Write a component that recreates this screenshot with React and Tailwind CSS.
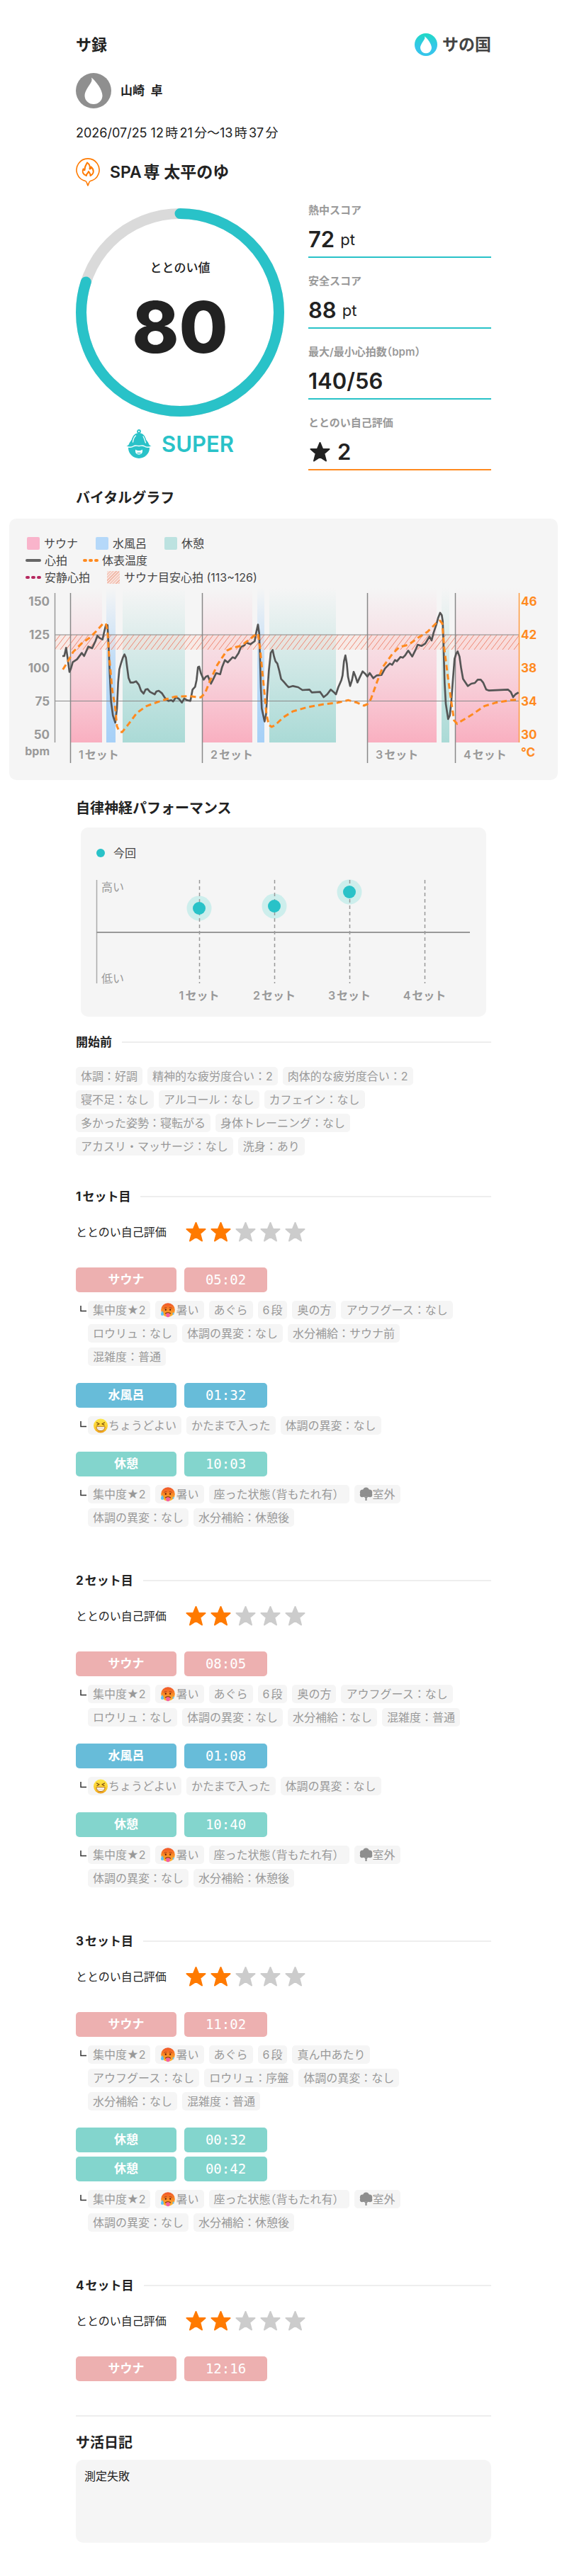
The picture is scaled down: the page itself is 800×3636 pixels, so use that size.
import React from 'react';

const HEART_RATE =
    '264,738 272,738 280,703 286,745 294,805 300,792 308,764 326,752 346,725 356,738 374,698 390,705 404,675 412,652 422,662 434,668 440,640 448,608 455,607 460,700 464,800 470,930 478,990 488,1020 495,960 500,850 505,795 512,770 520,745 527,731 533,745 538,785 544,830 552,850 565,850 576,845 588,860 597,885 608,897 616,880 625,878 635,890 655,900 662,888 672,885 685,895 698,915 712,928 725,925 733,930 745,912 758,920 770,935 780,918 792,925 806,928 815,880 826,868 832,840 838,785 843,783 850,810 862,838 872,825 880,822 893,855 903,835 915,810 932,815 940,785 952,755 964,765 985,743 995,748 1010,725 1020,700 1035,692 1040,680 1060,688 1078,675 1084,640 1092,605 1097,640 1101,760 1104,870 1108,960 1120,1015 1126,985 1131,900 1138,800 1146,725 1154,712 1160,740 1166,760 1174,770 1182,800 1190,835 1202,848 1214,862 1222,870 1240,865 1262,870 1280,882 1310,880 1320,892 1355,890 1370,912 1385,900 1400,880 1412,890 1422,900 1432,870 1445,840 1450,820 1456,760 1462,735 1468,770 1473,825 1482,865 1490,840 1497,805 1505,825 1513,850 1522,830 1535,803 1545,812 1555,825 1565,810 1580,832 1595,820 1615,818 1630,790 1650,770 1660,775 1672,755 1680,760 1695,742 1705,745 1715,735 1728,715 1745,740 1760,710 1768,690 1785,695 1800,685 1818,655 1827,672 1835,640 1847,605 1855,575 1863,555 1870,565 1874,590 1877,680 1882,850 1887,940 1897,1005 1904,990 1910,935 1917,840 1924,750 1931,728 1937,718 1945,740 1952,790 1960,835 1970,850 1980,865 1995,855 2010,852 2022,838 2035,838 2045,850 2058,880 2070,884 2150,880 2162,890 2172,912 2182,900 2195,892';

const SKIN_TEMP =
    '266,795 285,765 310,720 345,685 380,660 410,630 435,602 448,600 455,630 462,740 475,880 488,960 495,1035 505,1058 517,1060 545,1025 580,978 620,950 680,928 740,910 800,908 850,913 868,895 890,840 920,775 960,715 985,703 1020,695 1060,665 1085,645 1092,643 1100,700 1115,850 1128,985 1138,1030 1150,1038 1165,1030 1200,997 1240,972 1300,955 1370,942 1430,935 1475,925 1510,935 1540,948 1555,942 1570,920 1595,850 1620,785 1660,730 1690,700 1730,690 1770,660 1810,635 1845,600 1862,588 1872,600 1880,700 1895,820 1910,930 1922,1010 1935,1025 1950,1015 2000,985 2050,950 2100,935 2160,925 2198,922';

const BANDS = [
    { x: 86, w: 45, fill: 'url(#sauna)' },
    { x: 137, w: 13, fill: 'url(#water)' },
    { x: 160, w: 88, fill: 'url(#rest)' },
    { x: 272, w: 71, fill: 'url(#sauna)' },
    { x: 350, w: 10, fill: 'url(#water)' },
    { x: 367, w: 94, fill: 'url(#rest)' },
    { x: 505, w: 98, fill: 'url(#sauna)' },
    { x: 610, w: 11, fill: 'url(#rest)' },
    { x: 629, w: 91, fill: 'url(#sauna)' },
];

const AXIS_ROWS = [
    { y: 25, bpm: '150', temp: '46' },
    { y: 72, bpm: '125', temp: '42' },
    { y: 119, bpm: '100', temp: '38' },
    { y: 166, bpm: '75', temp: '34' },
    { y: 213, bpm: '50', temp: '30' },
];

const SET_LINES = [86, 272, 505, 629];

const PERFORMANCE = [
    { x: 167, y: 54 },
    { x: 273, y: 51 },
    { x: 379, y: 31 },
    { x: 485, y: null },
];

// opening bracket takes half a cell after kanji
const Open = () => <span className="[font-feature-settings:'halt']">（</span>;

const Drop = ({ className }) => (
    <path
        className={className}
        d="M22 6.500C24 12 20 15 16.500 21C14 25.500 12.500 28 12.500 32A12.500 12 0 0 0 37.500 32C37.500 24 29 12 22 6.500Z"
    />
);

const HotFace = () => (
    <svg className="h-[21px] w-[22px] shrink-0" viewBox="0 0 22 21" aria-label="暑い顔">
        <defs>
            <linearGradient id="hot" x1="0" y1="0" x2="0" y2="1">
                <stop offset="0" stopColor="#f0542a" />
                <stop offset="0.5" stopColor="#f98a25" />
                <stop offset="1" stopColor="#fdb62e" />
            </linearGradient>
        </defs>
        <circle cx="11" cy="10" r="9.800" fill="url(#hot)" />
        <path d="M5.500 7.500Q7 6 9 6.500M13 6.500Q15 6 16.500 7.500" stroke="#b5421a" strokeWidth="1" fill="none" strokeLinecap="round" />
        <ellipse cx="7.800" cy="9.700" rx="1.100" ry="1.400" fill="#6b2410" />
        <ellipse cx="14.200" cy="9.700" rx="1.100" ry="1.400" fill="#6b2410" />
        <path d="M7.500 15Q11 12.500 14.500 15" stroke="#6b2410" strokeWidth="1.200" fill="none" strokeLinecap="round" />
        <path d="M8.300 15Q11 14 13.700 15V17.500a2.700 2.700 0 0 1-5.400 0Z" fill="#f45fa0" />
        <path d="M3 11C2 13 1 14.500 1 16a2 2 0 0 0 4 0C5 14.500 4 13 3 11Z" fill="#5cc3f7" />
        <path d="M18.500 13C18 14.200 17.500 15 17.500 15.800a1 1 0 0 0 2 0C19.500 15 19 14.200 18.500 13Z" fill="#5cc3f7" />
    </svg>
);

const GrinFace = () => (
    <svg className="h-[21px] w-[22px] shrink-0" viewBox="0 0 22 21" aria-label="笑顔">
        <defs>
            <linearGradient id="grin" x1="0" y1="0" x2="0" y2="1">
                <stop offset="0" stopColor="#fde849" />
                <stop offset="0.7" stopColor="#fcc82a" />
                <stop offset="1" stopColor="#e99a1c" />
            </linearGradient>
        </defs>
        <circle cx="11" cy="10.500" r="10" fill="url(#grin)" />
        <path d="M5.500 6L9 7.800L6 9.500M16.500 6L13 7.800L16 9.500" stroke="#7a4a10" strokeWidth="1.200" fill="none" strokeLinecap="round" strokeLinejoin="round" />
        <path d="M5 11.800H17C17 15.500 14.500 17.500 11 17.500S5 15.500 5 11.800Z" fill="#fff" stroke="#a8691a" strokeWidth="0.900" strokeLinejoin="round" />
        <path d="M6 14.800H16" stroke="#c9a070" strokeWidth="0.600" />
    </svg>
);

const Tree = () => (
    <svg className="h-[20px] w-[19px] shrink-0" viewBox="0 0 19 20" fill="#8e8e8e" aria-label="木">
        <circle cx="9.500" cy="5" r="4.500" />
        <circle cx="4.800" cy="7.500" r="4" />
        <circle cx="14.200" cy="7.500" r="4" />
        <circle cx="4" cy="11" r="3.300" />
        <circle cx="15" cy="11" r="3.300" />
        <rect x="4" y="8" width="11" height="5.500" />
        <path d="M8.700 11h1.600l.4 8H8.300Z" />
        <path d="M9.500 15.500L6 12.500M9.500 15.500L13 12.500" stroke="#8e8e8e" strokeWidth="1.200" />
    </svg>
);

const BentArrow = () => (
    <svg className="mt-[7px] ml-[6px] h-[9px] w-[9px] shrink-0" viewBox="0 0 9 9" aria-hidden="true">
        <path d="M1 0V7.500H9" fill="none" stroke="#333" strokeWidth="1.500" />
    </svg>
);

const STAR_PATH =
    'M14.500 1L18.200 10H27.500L20.300 16.200L23 26.500L14.500 21L6 26.500L8.700 16.200L1.500 10H10.800Z';

const Star = ({ className }) => (
    <svg className={`h-[28px] w-[29px] stroke-2 ${className}`} viewBox="0 0 29 28" strokeLinejoin="round" aria-hidden="true">
        <path d={STAR_PATH} />
    </svg>
);

const HOT = <><HotFace />暑い</>;
const GRIN = <><GrinFace />ちょうどよい</>;
const OUTSIDE = <><Tree />室外</>;
const SEATED = <span>座った状態<Open />背もたれ有）</span>;

const REST_TAGS = ['集中度★2', HOT, SEATED, OUTSIDE, '体調の異変：なし', '水分補給：休憩後'];
const WATER_TAGS = [GRIN, 'かたまで入った', '体調の異変：なし'];

const BEFORE_TAGS = [
    '体調：好調',
    '精神的な疲労度合い：2',
    '肉体的な疲労度合い：2',
    '寝不足：なし',
    'アルコール：なし',
    'カフェイン：なし',
    '多かった姿勢：寝転がる',
    '身体トレーニング：なし',
    'アカスリ・マッサージ：なし',
    '洗身：あり',
];

const SETS = [
    {
        title: '1セット目',
        steps: [
            {
                badges: [{ kind: 'sauna', time: '05:02' }],
                tags: ['集中度★2', HOT, 'あぐら', '6段', '奥の方', 'アウフグース：なし', 'ロウリュ：なし', '体調の異変：なし', '水分補給：サウナ前', '混雑度：普通'],
            },
            { badges: [{ kind: 'water', time: '01:32' }], tags: WATER_TAGS },
            { badges: [{ kind: 'rest', time: '10:03' }], tags: REST_TAGS },
        ],
    },
    {
        title: '2セット目',
        steps: [
            {
                badges: [{ kind: 'sauna', time: '08:05' }],
                tags: ['集中度★2', HOT, 'あぐら', '6段', '奥の方', 'アウフグース：なし', 'ロウリュ：なし', '体調の異変：なし', '水分補給：なし', '混雑度：普通'],
            },
            { badges: [{ kind: 'water', time: '01:08' }], tags: WATER_TAGS },
            { badges: [{ kind: 'rest', time: '10:40' }], tags: REST_TAGS },
        ],
    },
    {
        title: '3セット目',
        steps: [
            {
                badges: [{ kind: 'sauna', time: '11:02' }],
                tags: ['集中度★2', HOT, 'あぐら', '6段', '真ん中あたり', 'アウフグース：なし', 'ロウリュ：序盤', '体調の異変：なし', '水分補給：なし', '混雑度：普通'],
            },
            {
                badges: [{ kind: 'rest', time: '00:32' }, { kind: 'rest', time: '00:42' }],
                tags: REST_TAGS,
            },
        ],
    },
    {
        title: '4セット目',
        steps: [{ badges: [{ kind: 'sauna', time: '12:16' }], tags: [] }],
    },
];

const KINDS = {
    sauna: { label: 'サウナ', color: 'bg-[#edb0b0]' },
    water: { label: '水風呂', color: 'bg-[#67bcd9]' },
    rest: { label: '休憩', color: 'bg-[#83d5cd]' },
};

const Tags = ({ items }) => (
    <ul className="flex flex-wrap gap-[7px] pr-8">
        {items.map((item, index) => (
            <li key={index} className="flex h-[26px] items-center rounded-[5px] bg-[#f5f5f5] px-[7px] text-base leading-6 whitespace-nowrap text-[#999]">
                {item}
            </li>
        ))}
    </ul>
);

const RuledHeading = ({ children }) => (
    <h3 className="flex items-center gap-[14px] text-[17px] leading-6 font-bold">
        {children}
        <span className="h-[2px] flex-1 bg-[#eee]" />
    </h3>
);

const Stat = ({ label, border, children }) => (
    <div className={`border-b-2 pb-[6px] ${border}`}>
        <dt className="text-[15px] leading-5 font-semibold text-[#999]">{label}</dt>
        <dd className="mt-[13px] flex h-9 items-center text-[31px] leading-9 font-semibold">{children}</dd>
    </div>
);

const SetSection = ({ title, steps }) => (
    <section>
        <RuledHeading>{title}</RuledHeading>
        <div className="mt-6 flex h-7 items-center gap-[27px]">
            <span className="text-base leading-6">ととのい自己評価</span>
            <div className="flex gap-[6px]" role="img" aria-label="5段階中2">
                {[1, 2, 3, 4, 5].map((n) => (
                    <Star key={n} className={n <= 2 ? 'fill-[#ff7a00] stroke-[#ff7a00]' : 'fill-[#ccc] stroke-[#ccc]'} />
                ))}
            </div>
        </div>
        <div className="mt-9 flex flex-col gap-6">
            {steps.map((step, index) => (
                <div key={index} className="flex flex-col gap-3">
                    <div className="flex flex-col gap-[6px]">
                        {step.badges.map((badge) => (
                            <div key={badge.time} className="flex h-[35px] gap-[11px] text-white">
                                <span className={`flex w-[142px] items-center justify-center rounded-[5px] text-[17px] font-bold ${KINDS[badge.kind].color}`}>
                                    {KINDS[badge.kind].label}
                                </span>
                                <span className={`flex w-[117px] items-center justify-center rounded-[5px] font-['DejaVu_Sans_Mono',monospace] text-[19px] ${KINDS[badge.kind].color}`}>
                                    {badge.time}
                                </span>
                            </div>
                        ))}
                    </div>
                    {step.tags.length > 0 && (
                        <div className="flex items-start gap-[2px]">
                            <BentArrow />
                            <Tags items={step.tags} />
                        </div>
                    )}
                </div>
            ))}
        </div>
    </section>
);

const VitalGraph = () => (
    <div className="mx-[13px] mt-[15px] overflow-hidden rounded-[10px] bg-[#f5f5f5] pt-[23px]">
        <div className="px-[23px] text-base leading-6 text-[#444]">
            <div className="flex gap-[25px] pl-[2px]">
                <span className="flex items-center gap-[6px]"><i className="h-[18px] w-[18px] rounded-xs bg-[#f9b4cb]" />サウナ</span>
                <span className="flex items-center gap-[6px]"><i className="h-[18px] w-[18px] rounded-xs bg-[#b5d8f9]" />水風呂</span>
                <span className="flex items-center gap-[6px]"><i className="h-[18px] w-[18px] rounded-xs bg-[#bce2e0]" />休憩</span>
            </div>
            <div className="flex gap-[22px]">
                <span className="flex items-center gap-[5px]"><i className="h-1 w-[22px] rounded-full bg-[#666]" />心拍</span>
                <span className="flex items-center gap-[5px]">
                    <svg className="h-1 w-[22px]" viewBox="0 0 22 4"><path d="M2 2h2M10 2h2M18 2h2" stroke="#ff8a1f" strokeWidth="4" strokeLinecap="round" /></svg>
                    体表温度
                </span>
            </div>
            <div className="flex gap-6">
                <span className="flex items-center gap-[5px]">
                    <svg className="h-1 w-[22px]" viewBox="0 0 22 4"><path d="M2 2h2M10 2h2M18 2h2" stroke="#b5285f" strokeWidth="4" strokeLinecap="round" /></svg>
                    安静心拍
                </span>
                <span className="flex items-center gap-[6px]">
                    <i className="h-[18px] w-[18px] rounded-xs bg-[repeating-linear-gradient(135deg,#f0b5a3_0_1px,#f8dfd8_1px_3px)]" />
                    サウナ目安心拍 (113~126)
                </span>
            </div>
        </div>
        <svg className="mt-[3px] block w-full font-['Inter','Noto_Sans_CJK_JP',sans-serif] [text-autospace:normal]" viewBox="0 0 774 271" role="img" aria-label="バイタルグラフ">
            <defs>
                <linearGradient id="sauna" x1="0" y1="0" x2="0" y2="1">
                    <stop offset="0" stopColor="#f9b4c4" stopOpacity="0" />
                    <stop offset="0.5" stopColor="#f9b9c9" stopOpacity="0.5" />
                    <stop offset="1" stopColor="#f9afc0" />
                </linearGradient>
                <linearGradient id="water" x1="0" y1="0" x2="0" y2="1">
                    <stop offset="0" stopColor="#a6d0f7" stopOpacity="0" />
                    <stop offset="0.5" stopColor="#a6d0f7" stopOpacity="0.7" />
                    <stop offset="1" stopColor="#a6d0f7" />
                </linearGradient>
                <linearGradient id="rest" x1="0" y1="0" x2="0" y2="1">
                    <stop offset="0" stopColor="#aadad6" stopOpacity="0" />
                    <stop offset="0.5" stopColor="#aadad6" stopOpacity="0.5" />
                    <stop offset="1" stopColor="#aadad6" />
                </linearGradient>
                <pattern id="hatch" width="8" height="21" y="66" patternUnits="userSpaceOnUse">
                    <rect width="8" height="21" fill="#fbd5cb" fillOpacity="0.35" />
                    <path d="M-16 21L0 0M-8 21L8 0M0 21L16 0M8 21L24 0" stroke="#ee8672" strokeWidth="1" />
                </pattern>
            </defs>
            {BANDS.map((band) => (
                <rect key={band.x} x={band.x} y="0" width={band.w} height="218" fill={band.fill} />
            ))}
            <rect x="64" y="66" width="656" height="21" fill="url(#hatch)" />
            <path d="M64 66H720M64 159.500H720" stroke="#888" strokeWidth="1" />
            <path d="M64.500 7V218" stroke="#999" strokeWidth="1.500" />
            {SET_LINES.map((x, index) => (
                <g key={x}>
                    <path d={`M${x + 0.5} 7V247`} stroke="#888" strokeWidth="1.500" />
                    <text x={x + 12} y="241" fontSize="16" fontWeight="600" fill="#999">{`${index + 1}セット`}</text>
                </g>
            ))}
            <path d="M719.500 7V218" stroke="#ff9a3d" strokeWidth="1.500" />
            <g transform="translate(-13 -150) scale(0.33333)" fill="none" strokeLinejoin="round">
                <polyline points={HEART_RATE} stroke="#555" strokeWidth="8" />
                <polyline points={SKIN_TEMP} stroke="#ff8a1f" strokeWidth="9" strokeDasharray="24 15" />
            </g>
            {AXIS_ROWS.map((row) => (
                <g key={row.bpm} fontSize="17" fontWeight="700">
                    <text x="57" y={row.y} textAnchor="end" fill="#999">{row.bpm}</text>
                    <text x="722" y={row.y} fill="#ff8a1f">{row.temp}</text>
                </g>
            ))}
            <text x="57" y="236" textAnchor="end" fontSize="16" fontWeight="700" fill="#999">bpm</text>
            <text x="722" y="238" fontSize="17" fontWeight="700" fill="#ff8a1f">°C</text>
        </svg>
    </div>
);

const PerformanceGraph = () => (
    <div className="mx-[7px] mt-[13px] overflow-hidden rounded-[10px] bg-[#f5f5f5] pt-6">
        <p className="flex items-center gap-3 pl-[22px] text-base leading-6 text-[#444]">
            <i className="h-3 w-3 rounded-full bg-[#29c2c8]" />
            今回
        </p>
        <svg className="mt-3 block w-full font-['Inter','Noto_Sans_CJK_JP',sans-serif] [text-autospace:normal]" viewBox="0 0 572 207" role="img" aria-label="自律神経パフォーマンス">
            <path d="M22.500 14V160" stroke="#aaa" strokeWidth="1.500" />
            <text x="29" y="30" fontSize="16" fill="#999">高い</text>
            <text x="29" y="159" fontSize="16" fill="#999">低い</text>
            {PERFORMANCE.map((point, index) => (
                <g key={point.x}>
                    {point.y !== null && <circle cx={point.x} cy={point.y} r="17.500" fill="#cdeeec" />}
                    <path d={`M${point.x + 0.5} 14V160`} stroke="#999" strokeWidth="1.500" strokeDasharray="5 4" />
                    {point.y !== null && <circle cx={point.x} cy={point.y} r="9" fill="#29c2c8" />}
                    <text x={point.x} y="183" textAnchor="middle" fontSize="16" fontWeight="600" fill="#999">{`${index + 1}セット`}</text>
                </g>
            ))}
            <path d="M22 88H549" stroke="#999" strokeWidth="2" />
        </svg>
    </div>
);

const App = () => (
    <main className="bg-white pt-[47px] pb-12 font-['Inter','Noto_Sans_CJK_JP',sans-serif] text-[#222] [text-autospace:normal]" lang="ja">
        <div className="mx-auto w-full max-w-[586px]">
            <header className="flex h-8 items-center justify-between">
                <h1 className="text-[22px] leading-8 font-bold">サ録</h1>
                <div className="flex items-center gap-[7px]">
                    <svg className="h-8 w-8" viewBox="0 0 50 50" aria-hidden="true">
                        <defs>
                            <linearGradient id="logo" x1="0" y1="0" x2="0" y2="1">
                                <stop offset="0" stopColor="#1fd9c5" />
                                <stop offset="0.6" stopColor="#35c6ea" />
                            </linearGradient>
                        </defs>
                        <circle cx="25" cy="25" r="25" fill="url(#logo)" />
                        <Drop className="fill-white" />
                    </svg>
                    <span className="text-[23px] leading-8 font-bold text-[#444]">サの国</span>
                </div>
            </header>

            <div className="mt-6 flex items-center gap-[13px]">
                <svg className="h-[50px] w-[50px]" viewBox="0 0 50 50" aria-hidden="true">
                    <circle cx="25" cy="25" r="25" fill="#8f8f8f" />
                    <Drop className="fill-white" />
                </svg>
                <p className="text-[17px] leading-6 font-semibold">山崎&nbsp;&nbsp;卓</p>
            </div>

            <p className="mt-[23px] text-[18px] leading-6">2026/07/25 12時21分〜13時37分</p>

            <div className="mt-[23px] flex items-center gap-[14px]">
                <svg className="h-10 w-[34px]" viewBox="0 0 34 40" fill="none" stroke="#ff7a00" strokeWidth="1.600" strokeLinejoin="round" aria-hidden="true">
                    <path d="M13.500 32.500A16 16 0 1 1 20.500 32.500C18.500 33 18.500 36 17 39C15.500 36 15.500 33 13.500 32.500Z" />
                    <path d="M15 25C10 23.500 8.500 19.500 10.500 15.500C11 17 12 17.500 12.500 17C12 12 15 9 16 6.500C19.500 9 20.500 12 19.500 15.500C21.500 15.500 22 14 21.500 12.500C26 16.500 26 22.500 20.500 25C21 22 19 21 18 19C17.500 22 14.500 22 15 25Z" strokeWidth="2" />
                </svg>
                <h2 className="text-[23px] leading-8 font-semibold">SPA専 太平のゆ</h2>
            </div>

            <div className="mt-6 flex gap-[34px]">
                <div className="w-[294px] shrink-0 pt-[7px]">
                    <div className="grid place-items-center">
                        <svg className="col-start-1 row-start-1 h-[294px] w-[294px]" viewBox="0 0 294 294" fill="none" strokeWidth="15" aria-hidden="true">
                            <circle cx="147" cy="147" r="139.500" stroke="#dadada" />
                            <circle cx="147" cy="147" r="139.500" stroke="#29c2c8" pathLength="100" strokeDasharray="80 100" strokeLinecap="round" transform="rotate(-90 147 147)" />
                        </svg>
                        <div className="col-start-1 row-start-1 flex flex-col items-center pb-1">
                            <span className="text-[17px] leading-6 font-medium">ととのい値</span>
                            <span className="mt-[22px] text-[100px] leading-[100px] font-extrabold">80</span>
                        </div>
                    </div>
                    <div className="mt-[18px] flex h-[41px] items-center justify-center gap-[14px] text-[31px] leading-10 font-semibold text-[#29c2c8]">
                        <svg className="h-[41px] w-9" viewBox="0 0 36 41" aria-hidden="true">
                            <circle cx="18" cy="3" r="2" fill="none" stroke="#29c2c8" strokeWidth="1.800" />
                            <circle cx="18" cy="26" r="15" fill="#29c2c8" />
                            <path d="M0 24C2 23 4 22 6 19C8.500 15 8 6 18 5C28 6 27.500 15 30 19C32 22 34 23 36 24C32 26 28 25.500 25 23.500C22.500 22 21 23.500 18 23.500S13.500 22 11 23.500C8 25.500 4 26 0 24Z" fill="#29c2c8" />
                            <path d="M9.500 18C10 14 11 11 13.500 9M24 10C26 13 26 16 27.500 19" fill="none" stroke="#fff" strokeWidth="1.300" strokeLinecap="round" />
                            <path d="M0 24C4 26 8 25.500 11 23.500C13.500 22 15 23.500 18 23.500S22.500 22 25 23.500C28 25.500 32 26 36 24" fill="none" stroke="#fff" strokeWidth="1.500" />
                            <path d="M13 28.500C16 30.500 20 30.500 23 28.500V31C23 37 13 37 13 31Z" fill="#fff" />
                            <path d="M15.500 33.500H20.500" stroke="#29c2c8" strokeWidth="1.200" />
                        </svg>
                        SUPER
                    </div>
                </div>

                <dl className="flex min-w-0 flex-1 flex-col gap-[23px]">
                    <Stat label="熱中スコア" border="border-[#29c2c8]">
                        72<span className="ml-2 text-[22px] font-normal">pt</span>
                    </Stat>
                    <Stat label="安全スコア" border="border-[#29c2c8]">
                        88<span className="ml-2 text-[22px] font-normal">pt</span>
                    </Stat>
                    <Stat label={<>最大/最小心拍数<Open />bpm）</>} border="border-[#29c2c8]">
                        140/56
                    </Stat>
                    <Stat label="ととのい自己評価" border="border-[#ff8a1f]">
                        <Star className="ml-[2px] mr-[10px] fill-[#222] stroke-[#222]" />2
                    </Stat>
                </dl>
            </div>

            <h2 className="mt-[25px] text-xl leading-7 font-bold">バイタルグラフ</h2>
        </div>

        <VitalGraph />

        <div className="mx-auto w-full max-w-[586px]">
            <h2 className="mt-[26px] text-xl leading-7 font-bold">自律神経パフォーマンス</h2>
            <PerformanceGraph />

            <section className="mt-6">
                <RuledHeading>開始前</RuledHeading>
                <div className="mt-[23px]">
                    <Tags items={BEFORE_TAGS} />
                </div>
            </section>

            <div className="mt-[46px] flex flex-col gap-16">
                {SETS.map((set) => (
                    <SetSection key={set.title} {...set} />
                ))}
            </div>

            <hr className="mt-12 border-t-2 border-[#eee]" />
            <h2 className="mt-[23px] text-xl leading-7 font-bold">サ活日記</h2>
            <p className="mt-[10px] min-h-[117px] rounded-[10px] bg-[#f5f5f5] px-3 py-[11px] text-base leading-6">測定失敗</p>
        </div>
    </main>
);

export default App;
